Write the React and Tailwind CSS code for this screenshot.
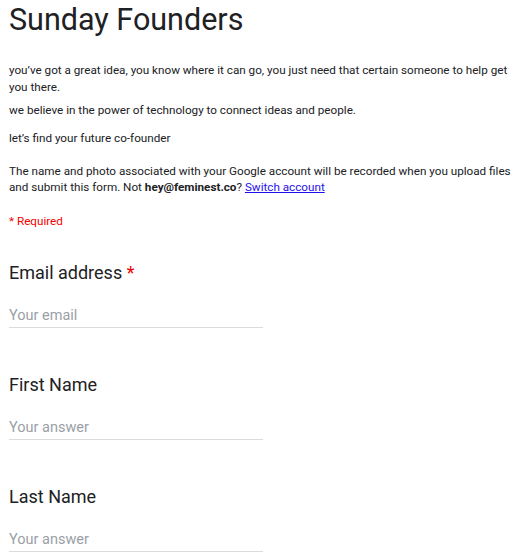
import React from 'react';

const Question = ({ label, placeholder, required }) => (
  <div className="pb-[45px]">
    <div className="text-[18px] leading-[24px] text-[#202124]">
      {label}
      {required && <span className="text-[#f20000]"> *</span>}
    </div>
    <div className="mt-[21px] w-[254px] border-b border-[#dadce0] pb-[1px] text-[14.5px] leading-[20px] text-[#9aa0a6]">
      {placeholder}
    </div>
  </div>
);

const App = () => {
  return (
    <div className="min-h-screen bg-white px-[9px] text-[#202124]" style={{ fontFamily: 'Roboto, "Liberation Sans", sans-serif' }}>
      <h1 className="text-[30.5px] leading-[40px]">Sunday Founders</h1>

      <div className="mt-[22px] text-[11.7px] leading-[17px]">
        <p>
          you’ve got a great idea, you know where it can go, you just need that certain someone to help get
          you there.
        </p>
        <p className="mt-[6px]">we believe in the power of technology to connect ideas and people.</p>
        <p className="mt-[11px]">let’s find your future co-founder</p>
      </div>

      <p className="mt-[16px] text-[11.7px] leading-[16px]">
        The name and photo associated with your Google account will be recorded when you upload files and
        submit this form. Not <b className="font-bold">hey@feminest.co</b>?{' '}
        <a href="#" className="text-[#1f10ee] underline">Switch account</a>
      </p>

      <p className="mt-[18px] text-[11.7px] leading-[16px] text-[#f20000]">* Required</p>

      <div className="mt-[32px]">
        <Question label="Email address" placeholder="Your email" required />
        <Question label="First Name" placeholder="Your answer" />
        <Question label="Last Name" placeholder="Your answer" />
      </div>
    </div>
  );
};

export default App;
